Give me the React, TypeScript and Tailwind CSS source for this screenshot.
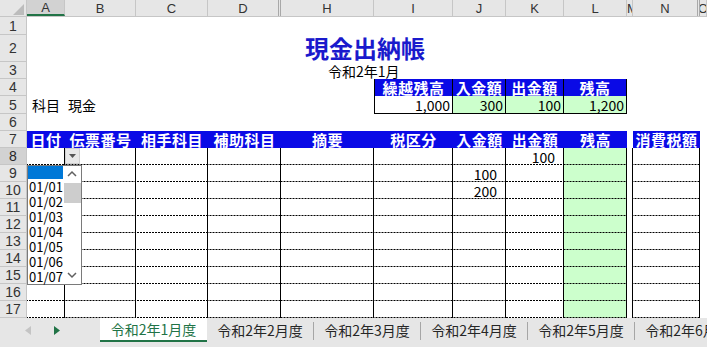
import { ReactNode } from 'react';

type Col = { id: string; w: string };

const COLS: Col[] = [
  { id: 'A', w: 'w-[38px]' },
  { id: 'B', w: 'w-[71px]' },
  { id: 'C', w: 'w-[72px]' },
  { id: 'D', w: 'w-[73px]' },
  { id: 'H', w: 'w-[93px]' },
  { id: 'I', w: 'w-[79px]' },
  { id: 'J', w: 'w-[53px]' },
  { id: 'K', w: 'w-[58px]' },
  { id: 'L', w: 'w-[63px]' },
  { id: 'M', w: 'w-[6px]' },
  { id: 'N', w: 'w-[67px]' },
  { id: 'O', w: 'w-[7px]' },
];

const HEAD: Record<string, string> = {
  A: '日付',
  B: '伝票番号',
  C: '相手科目',
  D: '補助科目',
  H: '摘要',
  I: '税区分',
  J: '入金額',
  K: '出金額',
  L: '残高',
  N: '消費税額',
};

const SUMMARY_HEAD: Record<string, string> = {
  I: '繰越残高',
  J: '入金額',
  K: '出金額',
  L: '残高',
};

const SUMMARY: Record<string, string> = {
  I: '1,000',
  J: '300',
  K: '100',
  L: '1,200',
};

const VALUES: Record<number, Record<string, string>> = {
  8: { K: '100' },
  9: { J: '100' },
  10: { J: '200' },
};

const TABS = ['令和2年2月度', '令和2年3月度', '令和2年4月度', '令和2年5月度', '令和2年6月度'];

const DATES = ['01/01', '01/02', '01/03', '01/04', '01/05', '01/06', '01/07'];

const BLUE = 'bg-[#0a0ae6]';
const DASH =
  'bg-[linear-gradient(to_right,#000_2px,transparent_2px)] bg-size-[3px_1px] bg-[length:3px_1px] bg-bottom bg-repeat-x';

type SheetRowProps = {
  n: number;
  h: string;
  active?: boolean;
  render?: (col: Col) => ReactNode;
};

const SheetRow = ({ n, h, active, render }: SheetRowProps) => (
  <div className={`flex ${h}`}>
    <div
      className={`w-[27px] shrink-0 flex items-center justify-center border-r border-b border-[#c6c6c6] font-['Liberation_Sans',sans-serif] text-[14px] leading-none ${
        active ? 'bg-[#d2d2d2] text-[#262626]' : 'bg-[#e6e6e6] text-[#333]'
      }`}
    >
      {n}
    </div>
    {COLS.map((c) =>
      render ? render(c) : <div key={c.id} className={`${c.w} shrink-0`} />
    )}
  </div>
);

const ColumnHeader = () => (
  <div className="flex h-[17px] bg-[#e6e6e6] border-b border-[#c6c6c6] font-['Liberation_Sans',sans-serif] text-[13px] leading-none text-[#333]">
    <div className="w-[27px] shrink-0 border-r border-[#c6c6c6] flex items-end justify-end pr-[2px] pb-[1px]">
      <svg width="11" height="11" viewBox="0 0 11 11">
        <polygon points="0,11 11,11 11,0" fill="#bcbcbc" />
      </svg>
    </div>
    {COLS.map((c) => (
      <div
        key={c.id}
        className={`${c.w} shrink-0 overflow-hidden flex items-center ${
          c.id === 'M' ? 'justify-start' : 'justify-center'
        } ${
          c.id === 'A'
            ? 'bg-[#d2d2d2] border-b-2 border-b-[#217346] border-r border-r-[#c6c6c6]'
            : c.id === 'D' || c.id === 'N'
            ? 'border-r-[3px] border-double border-[#a8a8a8]'
            : 'border-r border-[#c6c6c6]'
        }`}
      >
        {c.id}
      </div>
    ))}
  </div>
);

const Dropdown = () => (
  <div className="absolute left-[27px] top-[165px] w-[55px] h-[120px] bg-white border border-[#7a7a7a] flex text-[13px]">
    <div className="w-[35px] shrink-0 flex flex-col">
      <div className="h-[14px] bg-[#0078d7]" />
      {DATES.map((d) => (
        <div key={d} className="h-[15px] leading-[15px] pl-[1px] whitespace-nowrap">
          {d}
        </div>
      ))}
    </div>
    <div className="flex-1 flex flex-col items-center">
      <svg width="12" height="14" viewBox="0 0 12 14" className="mt-[1px]">
        <path d="M2 9 L6 5 L10 9" fill="none" stroke="#606060" strokeWidth="1.5" />
      </svg>
      <div className="w-[17px] h-[20px] mt-[2px] bg-[#cdcdcd]" />
      <div className="flex-1" />
      <svg width="12" height="14" viewBox="0 0 12 14" className="mb-[2px]">
        <path d="M2 5 L6 9 L10 5" fill="none" stroke="#606060" strokeWidth="1.5" />
      </svg>
    </div>
  </div>
);

const TabBar = () => (
  <div className="flex items-start h-[29px] bg-[#e6e6e6] text-[14px] text-[#262626]">
    <div className="w-[100px] h-[24px] shrink-0 flex items-center">
      <svg width="6" height="9" viewBox="0 0 6 9" className="ml-[25px]">
        <polygon points="6,0 6,9 0,4.5" fill="#c4c4c4" />
      </svg>
      <svg width="6" height="9" viewBox="0 0 6 9" className="ml-[23px]">
        <polygon points="0,0 0,9 6,4.5" fill="#217346" />
      </svg>
    </div>
    <div className="w-[107px] h-[24px] shrink-0 bg-white border-b-2 border-[#217346] text-[#217346] flex items-center justify-center">
      令和2年1月度
    </div>
    {TABS.map((t) => (
      <div key={t} className="flex items-start shrink-0">
        <div className="w-[106px] h-[24px] flex items-center justify-center whitespace-nowrap">
          {t}
        </div>
        <div className="w-px h-[18px] mt-[4px] bg-[#a6a6a6]" />
      </div>
    ))}
  </div>
);

const App = () => {
  const empty = (c: Col) => <div key={c.id} className={`${c.w} shrink-0`} />;

  return (
    <div className="relative w-[707px] h-[347px] overflow-hidden bg-white text-black font-['Noto_Sans_CJK_JP',sans-serif]">
      <ColumnHeader />
      <SheetRow n={1} h="h-[18px]" />
      <SheetRow
        n={2}
        h="h-[27px]"
        render={(c) =>
          c.id === 'H' ? (
            <div key={c.id} className={`${c.w} shrink-0 relative`}>
              <div className="absolute left-[24px] bottom-[2px] text-[24px] leading-none font-bold text-[#1a1acc] whitespace-nowrap">
                現金出納帳
              </div>
            </div>
          ) : (
            empty(c)
          )
        }
      />
      <SheetRow
        n={3}
        h="h-[17px]"
        render={(c) =>
          c.id === 'H' ? (
            <div
              key={c.id}
              className={`${c.w} shrink-0 flex items-center pl-[47px] text-[14px] leading-none whitespace-nowrap overflow-visible`}
            >
              令和2年1月
            </div>
          ) : (
            empty(c)
          )
        }
      />
      <SheetRow
        n={4}
        h="h-[17px]"
        render={(c) =>
          SUMMARY_HEAD[c.id] ? (
            <div
              key={c.id}
              className={`${c.w} shrink-0 ${BLUE} text-white font-bold text-[15px] leading-none tracking-[0.5px] flex items-center justify-center whitespace-nowrap border-r border-black ${
                c.id === 'I' ? 'border-l' : ''
              }`}
            >
              {SUMMARY_HEAD[c.id]}
            </div>
          ) : (
            empty(c)
          )
        }
      />
      <SheetRow
        n={5}
        h="h-[18px]"
        render={(c) =>
          c.id === 'A' ? (
            <div key={c.id} className={`${c.w} shrink-0 flex items-center gap-[8px] pl-[5px] text-[14px] leading-none whitespace-nowrap`}>
              <span>科目</span>
              <span>現金</span>
            </div>
          ) : SUMMARY[c.id] ? (
            <div
              key={c.id}
              className={`${c.w} shrink-0 flex items-center justify-end pr-[2px] text-[14px] leading-none border-r border-b border-black ${
                c.id === 'I' ? 'border-l bg-white' : 'bg-[#ccffcc]'
              }`}
            >
              {SUMMARY[c.id]}
            </div>
          ) : (
            empty(c)
          )
        }
      />
      <SheetRow n={6} h="h-[17px]" />
      <SheetRow
        n={7}
        h="h-[17px]"
        render={(c) =>
          HEAD[c.id] ? (
            <div
              key={c.id}
              className={`${c.w} shrink-0 ${BLUE} text-white font-bold text-[15px] leading-none tracking-[0.5px] flex items-center justify-center whitespace-nowrap`}
            >
              {HEAD[c.id]}
            </div>
          ) : (
            empty(c)
          )
        }
      />
      {[8, 9, 10, 11, 12, 13, 14, 15, 16, 17].map((n) => (
        <SheetRow
          key={n}
          n={n}
          h="h-[17px]"
          active={n === 8}
          render={(c) => {
            if (c.id === 'O') return empty(c);
            if (c.id === 'M')
              return <div key={c.id} className={`${c.w} shrink-0 border-r border-black`} />;
            const v = VALUES[n]?.[c.id];
            return (
              <div
                key={c.id}
                className={`${c.w} shrink-0 border-r border-black ${DASH} ${
                  c.id === 'L' ? 'bg-[#ccffcc]' : ''
                } flex items-center justify-end pr-[8px] text-[14px] leading-none`}
              >
                {v}
              </div>
            );
          }}
        />
      ))}
      <TabBar />

      {/* validation dropdown on A8 */}
      <div className="absolute left-[65px] top-[148px] w-[15px] h-[16px] bg-[#e8e8e8] border border-[#d0d0d0] flex items-center justify-center">
        <svg width="7" height="4" viewBox="0 0 7 4">
          <polygon points="0,0 7,0 3.5,4" fill="#555" />
        </svg>
      </div>
      <Dropdown />
    </div>
  );
};

export default App;
